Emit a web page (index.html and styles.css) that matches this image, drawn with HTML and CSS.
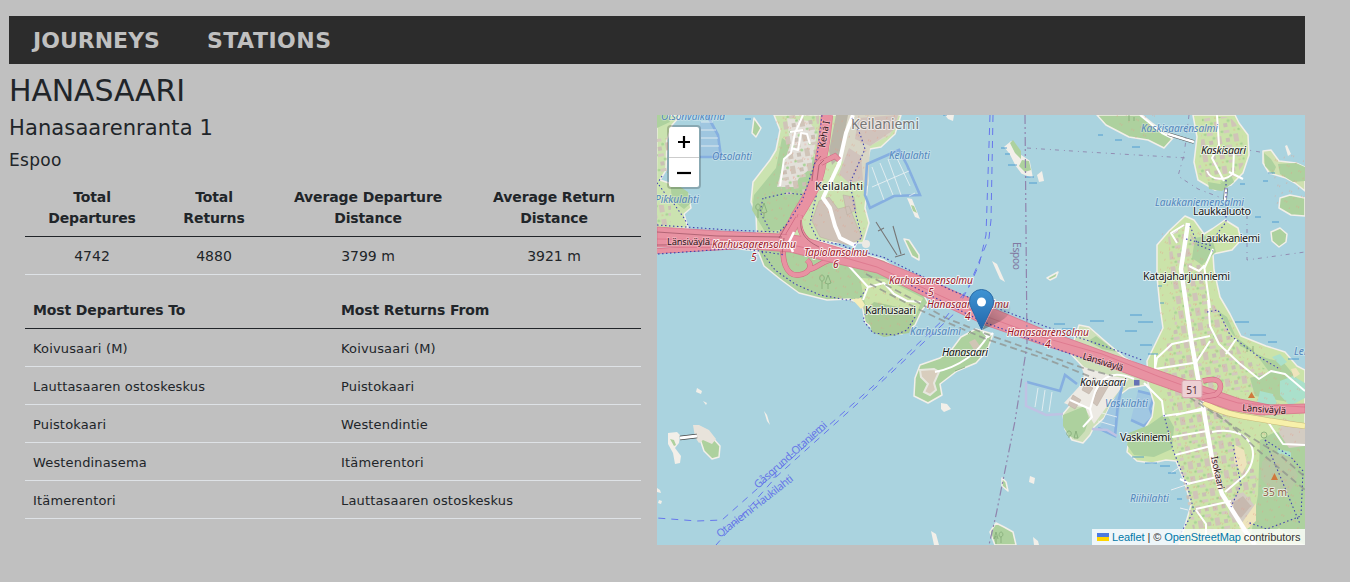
FILE: index.html
```html
<!DOCTYPE html>
<html lang="en">
<head>
<meta charset="utf-8">
<title>Hanasaari</title>
<link rel="stylesheet" href="styles.css">
</head>
<body>
<div class="page">
  <nav class="nav"><a class="nav-link journeys">JOURNEYS</a><a class="nav-link stations">STATIONS</a></nav>
  <h1 class="name"><span>HANASAARI</span></h1>
  <div class="columns">
    <section class="details">
      <h2 class="address">Hanasaarenranta 1</h2>
      <h3 class="city">Espoo</h3>
      <div class="tables">
        <table class="table totals">
          <colgroup><col class="c1"><col class="c2"><col class="c3"><col class="c4"></colgroup>
          <thead><tr><th>Total<br>Departures</th><th>Total<br>Returns</th><th>Average Departure<br>Distance</th><th>Average Return<br>Distance</th></tr></thead>
          <tbody><tr><td>4742</td><td>4880</td><td>3799 m</td><td>3921 m</td></tr></tbody>
        </table>
        <table class="table top">
          <thead><tr><th>Most Departures To</th><th>Most Returns From</th></tr></thead>
          <tbody>
            <tr><td>Koivusaari (M)</td><td>Koivusaari (M)</td></tr>
            <tr><td>Lauttasaaren ostoskeskus</td><td>Puistokaari</td></tr>
            <tr><td>Puistokaari</td><td>Westendintie</td></tr>
            <tr><td>Westendinasema</td><td>Itämerentori</td></tr>
            <tr><td>Itämerentori</td><td>Lauttasaaren ostoskeskus</td></tr>
          </tbody>
        </table>
      </div>
    </section>
    <section class="map">
      <svg class="tiles" viewBox="657 115 648 430" width="648" height="430">
        <defs>
          <pattern id="houses" width="17" height="15" patternUnits="userSpaceOnUse" patternTransform="rotate(-10)">
            <rect x="1" y="1" width="5" height="8" fill="#d0c4b8"/><rect x="10" y="4" width="4" height="4" fill="#c9bfb5"/><rect x="9" y="11" width="6" height="3" fill="#d3c9be"/><circle cx="7.500" cy="12" r="1.300" fill="#a5d191"/><circle cx="15.500" cy="2" r="1.500" fill="#a8d497"/><circle cx="3" cy="12" r=".6" fill="#e88a80"/>
          </pattern>
          <pattern id="specks" width="13" height="11" patternUnits="userSpaceOnUse" patternTransform="rotate(25)">
            <path d="M1 2h3M8 7h2" stroke="#e39b88" stroke-width=".8" stroke-dasharray="1 1"/>
          </pattern>
          <linearGradient id="pin" x1="0" y1="0" x2="0" y2="1"><stop offset="0" stop-color="#3e93d3"/><stop offset="1" stop-color="#2468ab"/></linearGradient>
          <linearGradient id="shade" x1="0" y1="1" x2="1" y2="0"><stop offset="0" stop-color="#222" stop-opacity=".45"/><stop offset="1" stop-color="#222" stop-opacity="0"/></linearGradient>
        </defs>
        <rect x="657" y="115" width="648" height="430" fill="#aad3df"/>

        <!-- western shore -->
        <path class="shore" fill="#cbe3b0" d="M657 115h24l-9 10-5 15-1 30-6 10 12 4 16 10 3 14-7 6 4 14-32 1z"/>
        <path fill="url(#houses)" d="M657 138h11v35h-11zM657 205h14v20h-14z"/>
        <path fill="#add19e" d="M670 180l18 12 3 11-7 6-12-9zM657 115h10l3 7-13 6z"/>
        <path fill="#9fc6e0" d="M700 122h13l7 17v18h-20z"/>
        <path class="marina" d="M707 115l11 20 3 22h-21"/><path class="pier" d="M701 122h12M701 130h15M701 138h17M701 146h18"/>
        <path class="walk" d="M657 184l5-8M659 185l7 10 8 9 10 14 5 9"/>

        <!-- Keilaniemi -->
        <path class="shore" fill="#cbe3b0" d="M774 115h127l-6 19-14 13-11 2-3 15 1 17-3 27 4 15-6 20-106-3-1-26-5-12 2-20 17-22 6-10 4-20z"/>
        <path fill="#add19e" d="M782 138l24 16 14 5-13 40-20 30-22 3-13-22 2-15 22-27z"/>
        <path fill="#e3e0da" d="M787 118l22 3 8 12-6 35-12 10-5 9h-17l5-18 8-24z"/>
        <path fill="url(#houses)" d="M782 115h37v30l-14 48-23 2-3-20 8-22z"/>
        <path fill="#d8d6c6" d="M846 115h53l-9 20-20 11-2 40-18-15-10-13z"/>
        <path fill="#d1c3bc" d="M858 118l40-3-3 14-25 17-15-7zM849 148l12 8 2 24-14 3-10-9z"/>
        <path fill="#b9b5a8" d="M836 115h12l-8 42-8 8-3-14z"/>
        <path class="block" d="M819 201l10-4 9 12 11-3 13 32-14 7-15-4-13-4-8-16zM843 195l11 2 2 13-9 5z"/>
        <path fill="url(#specks)" d="M775 115h120v20l-28 12-1 88-50-8-60-9-1-18 20-30z"/>
        <path class="minor" d="M803 115l-8 18-4 20-7 6-4 27M791 148l7 2 3-17 6 1 3 10M803 130l-13 2"/>
        <path class="street" d="M853 115l-7 18-7 31-16 34 7 10 5 18 5 12 16 8"/>
        <path class="walk" d="M852 118l8 16 5 15-15 34 6 32 6 22-9 10M816 196l-6 28 8 16 28 6M765 198l22-5 30 3M763 198l-3 14 10 18"/>
        <path class="marina" d="M867 164l32-14 8 15 13 30-26 1-24 12-5-13z"/><path class="pier" d="M872 167l12 33M880 163l13 32M888 159l13 36M896 156l14 30M872 187l37-16M909 196l6-3"/>

        <!-- Karhusaari and the southern bank -->
        <path class="shore" fill="#add19e" d="M657 247l55-1 46 5 6 15 16 13 19 14 28 7 22-1 13 5 3 18 13 11 24 1 13-9 7-15 6-7-10-19-34-24-70-20z"/>
        <path fill="#cbe3a9" d="M860 278l25 1 38 19-8 19-8 11-12-10-15 4-15-18z"/>
        <path fill="#aacb97" d="M866 310l8-8 33 7 8 9-6 15-25 4-12-5z"/>
        <path fill="url(#specks)" d="M775 250l85 15 54 35-6 28-40 1-10-25-30-7-35-14z"/>
        <path class="walk" d="M762 252l13 18 20 14 25 11 27 5 12-1 9-12M867 310l-4 10 10 13 22 2 12-5 8-13"/>
        <path class="minor" d="M848 265l20 22 16-4 10 11 13 7 14 1M863 300l5-13"/>
        <path fill="#f4edba" d="M852 299l9-1 4 7-4 4z"/>
        <circle cx="866" cy="244" r="4" fill="#eceae4"/>

        <!-- Hanasaari -->
        <path class="shore" fill="#add19e" d="M976 329l17 5-6 17-11 12-19 8-17 13 2 11-14 8-14-7 1-18 5-13 20-7 12-9 9-12z"/>
        <path fill="#d8cdbd" stroke="#e7e7df" stroke-width="2" d="M920 370l14-1 5 3-5 11 2 7-6 5-6-3 4-8-7-7z"/>
        <path fill="#d0c5b5" d="M969 342l6-3 5 7-6 4z"/>
        <path class="minor" d="M935 372c25-5 44-20 53-37M983 332l5 5 5-4"/>

        <!-- Koivusaari -->
        <path class="shore" fill="#cddfb9" d="M1079 325l10 2 16 14 20 17 23 12 4 14-23 4-16 12-9 18-10 9-4 8-7 8-11-3-7-11-2-15 10-12 10-10 2-23-15-16z"/>
        <path fill="#edeae4" d="M1081 366l31 10 17 3-18 22-17 23-10-17-13-1-7-3 22-24z"/>
        <path fill="#add19e" d="M1085 406l4 13-4 12-7 8-9-3-6-10v-11zM1096 336l21 16-15-3-14-8z"/>
        <path class="block" d="M1073 395l8 5-6 9-7-4zM1085 383l8 5-4 6-7-4zM1102 381l7 4-12 21-5-4z"/>
        <path class="minor" d="M1134 379c-28-12-35 5-39 13l-5 17 2 8-9 10M1070 400l20 9"/>
        <path fill="#a1c8e2" d="M1123 385l-3 23-4 29-17-8 12-25zM1138 391l16 4-4 14 3 8-9 9-13-7z"/>
        <path class="marina" d="M1027 382l33 9 5-16 12 9M1123 383l-5 20-3 33-17-8M1138 391l16 4-4 14 3 8-9 9-13-6"/>
        <path class="mole" d="M1026 382v24l20 9 17-1M1092 429l15 1 10 6"/><path class="pier" d="M1038 388l-3 19M1045 390l-3 21M1052 392l-3 20M1108 404l10 3M1102 413l15 4M1098 421l17 5"/>

        <!-- Lauttasaari -->
        <path class="shore" fill="#cbe3a9" d="M1185 216l9 4 10 14 8-5 13-9 13 8 3 12-9 10-19 4 1 16 6 27 10 17 11 22 25 10 19 6 12 14 8 4v175h-126l8-26 4-14-7-25-8-19-10-1-14 3-15-2-10-9 2-13 14-8 9-14 2-14-6-20-1-22 16-33-3-21-3-30 0-32 12-14z"/>
        <path fill="url(#houses)" d="M1168 234l15-10 12 16 10 28 5 30 18 31 15 28 28 15-12 20-45-1 18 35 25 50-8 62-54 1-13-64-10-68-9-25 3-36 9-18-4-50z"/>
        <path fill="#add19e" d="M1195 238l16-3 5 17-14 13-10-7zM1218 311l9 6 13 29 26 12 18 5 19 23-8 17-40-7-5-18 20-5-17-23-20-15zM1129 433l20-8 17-12 8 14-2 22-18 8-20-2-7-10zM1260 440l15-8 30 4v109l-26-17-18 12-10-5 7-40z"/>
        <path fill="#aae0cb" d="M1280 381l13-5 12 7v15l-15 8-10-11zM1260 391l13 3 4 9-8 4-12-4zM1272 357l8-3 7 8-6 4z"/>
        <path fill="#d3ccc2" d="M1283 419l22 5v22l-16 2-10-15zM1230 500l13-8 13 15-15 18-12-9z"/>
        <path fill="#c7b9af" d="M1234 502l9-6 8 10-10 12-8-7z"/>
        <path fill="#b7c9a4" d="M1262 462l10-10 18 6 8 18-8 16-20-2-9-12z"/>
        <path fill="#aae0cb" d="M1278 449l13 3v5l-14-4z"/>
        <path fill="#eee4bc" d="M1235 445l9 5 3 14-5 10-8-12zM1256 503v18l-13 12-4-6zM1291 369l5-1 4 6-6 4z"/>
        <path fill="url(#specks)" d="M1160 230h40l20 80 80 70v155h-100l-30-95-10-50z"/>
        <path class="minor" d="M1208 300l2 26 9 18 20 19 20 16 12-8 14 3 20 17M1210 336l-38 8-15 14-2 11 38-6M1226 354l10-15M1155 369v-15M1176 415l28-7M1172 437l35-6M1212 432c38-7 51 20 33 43l-20 17M1175 455l36-9M1190 484l-10-5M1196 509l35-8M1187 484l30-7M1144 383l18 18 2 15 40-6M1268 422l15 22 22 1M1210 341l-15 23M1189 266l10 5 5-5M1204 265l6 43M1213 249l-9 20M1177 243l-6-10 13-8M1196 510l10 14v14"/>
        <path class="street wide" d="M1188 223l-7 46 11 76 10 55 12 70 8 24 24 38 9 13"/>
        <path class="walk" d="M1190 226l8 19 15 6M1186 239l27 7M1164 415l9 35 15 38 6 23-18 30M1265 440l25 16 13 15-2 45-34 13-20-7M1233 445l8 40-10 22M1207 312l11-2 12 25 29 22 19 11M1265 440l35 84"/>
        <path class="rail" d="M1180 391l38 25 34 22 28 17 25 22M1190 393l35 27 35 32 45 38"/>
        <path d="M1204 402c8 6 23 12 43 15 18 3 34 6 58 9" fill="none" stroke="#c8b97a" stroke-width="6"/><path d="M1204 402c8 6 23 12 43 15 18 3 34 6 58 9" fill="none" stroke="#f7f0aa" stroke-width="5"/>

        <!-- northern islands -->
        <path class="shore" fill="#add19e" d="M1097 115l9 10 23 12 19 3 16 8 9-10-21-15-10-8z"/>
        <path class="shore" fill="#cbe3a9" d="M1193 115l4 22-3 25 4 18 17 10 16-5 12-12 6-18-1-20-9-12-4-8z"/>
        <path fill="url(#houses)" d="M1202 117h28l12 14 3 31-10 14-21 10-16-13 3-30z"/>
        <path fill="#add19e" d="M1208 182l12 2 11-9 3 7-12 9-13-2z"/>
        <path class="minor" d="M1217 115l2 30-7 13 12 23M1207 171c4 10 20 10 26 2l1-22M1229 172l14 7M1140 115l22 18 10 5"/>
        <path d="M1168 134l26 8" stroke="#555" stroke-width="3.600"/><path d="M1168 134l26 8" stroke="#fff" stroke-width="2.500"/>
        <path d="M1226 188l-1 13" stroke="#555" stroke-width="3.600"/><path d="M1226 188l-1 13" stroke="#fff" stroke-width="2.500"/>
        <path class="walk" d="M1226 180v42l-9 12-8 9"/>
        <path class="shore" fill="#cfe0b0" d="M1263 151l8-1 8 11 17 2 9 4v24l-10-8-9-5-17-5-6-10z"/>
        <path fill="#add19e" d="M1264 153l7 6 5 8-3 7-8-8zM1278 164l18-1 9 4v14l-12 1-13-8z"/>
        <path class="shore" fill="#add19e" d="M1280 198l10-3 15 3v18l-14-1-12-7zM1271 232l9-4 7 6-1 8-7 5-7-6z"/>
        <path fill="url(#specks)" d="M1110 115h45v25h-20zM1270 155h34v54h-28z"/>
        <path fill="#f2efe9" d="M1285 146l2-1 4 9-3 2z"/>

        <!-- islets -->
        <path class="shore" fill="#f2efe9" d="M1005 147l6-5 2 1 7 12 9 6 3 16-10-4-6-8-6-12z"/>
        <path fill="#add19e" d="M1010 143l3-3 8 11 0 8-6-6zM1022 160l7 1 2 9-6 2-6-6z"/>
        <path class="shore" fill="#add19e" d="M904 239l5 1 10 15v5l-7-4zM1047 278l11-6-2 5-6 3zM698 433l13 3 9 10-1 11-7 2-8-8zM754 118l7 10-5 9-4-4zM995 545l-5-13 6-9 8 4 9 5 3 13zM1002 478l4 4 2 9-6-5z"/>
        <path fill="#e8e3db" d="M693 425h6l10 5 7 9-4 5-9-4-4 3-4-6z"/>
        <path fill="#f2efe9" d="M992 261l5 3 8 18-5-3zM1037 175l5-4 2 10-5 1zM907 198l5 1 8 20-5-2zM945 115h9l-1 6-5-2zM697 388l5 3-1 3-5-2zM764 411l3 4 3 10-3-4zM668 433l9-1 3 3-1 8-4 5 6 8-1 7-5 1-2-11-5-9zM657 488l3 2 1 3-4-1zM659 500l3 1-1 3-3-1zM941 403l6 1 4 5-7 3-3-3zM931 531l5 3 3 11h-5zM1033 537l5 4 1 4h-5zM1030 476l5 2-1 6-5-2zM703 401l4 2-1 2z"/>
        <path fill="#add19e" d="M911 205l3 1 3 7-4-2zM670 439l4 1 2 5-2 1z"/>
        <path d="M680 438l17-2" stroke="#444" stroke-width="4.500"/><path d="M680 438l17-2" stroke="#fff" stroke-width="3"/>
        <path d="M1173 234l5-4M1171 473l9-6M1171 490l18-6M1180 508l8 2" stroke="#e9edf0"/>
        <path d="M876 222l21 33M893 226l8 28M878 231l6-3M895 257l10-3" fill="none" stroke="#777" stroke-width="1.100"/>
        <path class="reeds" d="M1001 148h6M1005 154h5M1008 165h9M1026 177h8M1029 183h8M1054 324h11M1062 329h14M1090 321h14M1130 315h12M1138 322h15M1125 331h12M1140 345h12M1148 354h10M1098 135h5M1115 140h7M1132 147h8M1268 173h7M1263 181h5M1255 217h6M1272 222h7M1240 184h5M1158 286h4M1160 303h4M1235 322h14M1250 335h16M1268 342h9M1288 359h11M1132 457h12M1145 463h12M1160 466h10M1168 473h8M1177 499h5M943 115h4M745 119h6"/>

        <!-- motorway -->
        <path class="rail" d="M866 274l48 26 32 18 40 16 52 18 45 16 30 8M870 284l50 26 26 12 40 17 60 20 50 20"/>
        <path class="motor-edge" d="M827 115c-2 20-3 31-6 42-1 22-11 38-24 59-4 8-9 20-16 22"/>
        <path class="motor" d="M827 115c-2 20-3 31-6 42-1 22-11 38-24 59-4 8-9 20-16 22"/>
        <path class="ramp-edge" d="M798 218l-14 24c-3 18 2 34 14 33s15-10 9-15M807 270c12-1 15-13 38-11M800 215c-4 18 8 28 20 34M821 163l14-7 4 4M657 251l90-5 25-3"/>
        <path class="ramp" d="M798 218l-14 24c-3 18 2 34 14 33s15-10 9-15M807 270c12-1 15-13 38-11M800 215c-4 18 8 28 20 34M821 163l14-7 4 4M657 251l90-5 25-3"/>
        <path class="carriage" d="M657 227l63 4 60 3 20 2 30 9 47 14 53 21 55 25 55 23 60 22 60 21 40 14 40 14 30 6 35-1v9l-45 2-30-5-40-14-40-14-63-23-47-15-55-19-55-26-53-26-47-11-40-10-50-4-83-1z"/>
        <path d="M657 239l70 1 61 4 44 10 45 13 53 24 55 25 57 21 60 17 58 23 30 11 48 15 67 4" fill="none" stroke="#ca4969" stroke-width=".7" opacity=".45"/>
        <path class="ramp-edge" d="M1203 381c22-6 20 10 12 14l-13 2"/><path class="ramp" d="M1203 381c22-6 20 10 12 14l-13 2"/>
        <path class="ramp" d="M799 220l-14 22M800 217c-3 15 5 24 16 30"/>
        <path d="M657 232l60 4 65 1M657 245l80-1 46 2M779 238l8-14M812 181l2-17 7-8M817 180l2-15 5-5M784 238l-2 16M801 220c-2 15 8 22 18 27" fill="none" stroke="#734" stroke-width=".8" opacity=".6"/>
        <path d="M794 232l-5 10 4 10" fill="none" stroke="#fff" stroke-width="2.500"/>
        <path class="walk" d="M657 225l72 5 50 2 8-8 15-23 15-44 5-42M658 254l82-6 45 7M845 247l38 10 28 14 42 20 30 12 64 24 60 20 35 13M904 282l77 39 62 23 58 21"/>

        <!-- boundaries and ferry lines -->
        <path class="boundary" d="M1025 115l2 230-12 76-19 94-7 30"/>
        <path class="boundary faint" d="M1027 148l60 4 100 6M1189 115l-5 40-6 21 20 13 21 8M1260 152l-12-2M1247 215v45l58-8"/>
        <path class="ferry" d="M990 115l-4 120-7 30-10 22-23 30-66 63-158 140-25 1-40-3M993 115l-2 105-2 18-21 50-12 24-80 75-100 90-60 68"/>

        <!-- trees, peaks, station -->
        <g fill="none" stroke="#83a977" stroke-width=".8"><path d="M758 218v-8c-3 0-3-6 0-6s3 6 0 6M764 218v-5l-3-1 3-9 3 9-3 1M822 289v-8c-3 0-3-6 0-6s3 6 0 6M828 289v-5l-3-1 3-8 3 8-3 1M996 544v-8l-2 3 2-7 2 7M1001 543v-6c-3 0-2-5 0-5s3 4 0 5M1069 438v-2c-3 0-3-5 0-5s3 5 0 5M1074 438l2-7 2 7zM1129 121v-6M1134 121v-4"/><circle cx="1264" cy="435" r="3"/><path d="M1247 352v-6M1253 352v-6M955 371l10-4M968 334l3-3"/></g>
        <path d="M1248 398l3.500-6 3.500 6zM1271 480l3.500-7 3.500 7z" fill="#cf793d"/>
        <rect x="1134" y="380" width="5.500" height="5.500" fill="#6572b5"/>

        <g class="water">
          <text x="661" y="120" textLength="64">Otsonvalkama</text><text x="712" y="160" textLength="40">Otsolahti</text><text x="655" y="203" textLength="44">Pikkulahti</text><text x="889" y="159" textLength="41">Keilalahti</text><text x="910" y="334.500" textLength="51">Karhusalmi</text><text x="1105" y="407" textLength="43">Vaskilahti</text><text x="1130" y="502" textLength="39">Riihilahti</text><text x="1141" y="132" textLength="77">Kaskisaarensalmi</text><text x="1155" y="206" textLength="89">Laukkaniemensalmi</text><text x="1294" y="355">Lehtisaarensalmi</text>
        </g>
        <g class="place">
          <text class="suburb" x="851" y="128.500" textLength="68">Keilaniemi</text><text x="815" y="190" textLength="48">Keilalahti</text><text x="865" y="314" textLength="51">Karhusaari</text><text x="1143" y="279.500" textLength="87">Katajaharjunniemi</text><text x="1201" y="241.500" textLength="59">Laukkaniemi</text><text x="1193" y="214.500" textLength="58">Laukkaluoto</text><text x="1120" y="440.500" textLength="50">Vaskiniemi</text>
          <g font-style="italic"><text x="942" y="356" textLength="46">Hanasaari</text><text x="1080" y="386" textLength="46">Koivusaari</text><text x="1201" y="153.500" textLength="45">Kaskisaari</text></g>
        </g>
        <g class="junction">
          <text x="712" y="248" textLength="84">Karhusaarensolmu</text><text x="751" y="260.500">5</text><text x="804" y="256" textLength="64">Tapiolansolmu</text><text x="833" y="267.500">6</text><text x="889" y="283.500" textLength="84">Karhusaarensolmu</text><text x="928" y="295.500">5</text><text x="927" y="307.500" textLength="82">Hanasaarensolmu</text><text x="965" y="319.500">4</text><text x="1007" y="336" textLength="82">Hanasaarensolmu</text><text x="1045" y="348">4</text>
        </g>
        <g class="road">
          <text x="667" y="244.500" textLength="43">Länsiväylä</text><text transform="translate(1082 359) rotate(17)" textLength="42">Länsiväylä</text><text transform="translate(1242 411) rotate(4)" textLength="44">Länsiväylä</text><text transform="translate(1211 457) rotate(78)" textLength="34">Isokaari</text><text transform="translate(825 148) rotate(-80)" textLength="27">Kehä I</text>
        </g>
        <g class="route"><text transform="translate(758 489) rotate(-42)" textLength="94">Gåsgrund-Otaniemi</text><text transform="translate(720 538) rotate(-38)" textLength="94">Otaniemi-Haukilahti</text></g>
        <text class="border-name" transform="translate(1013 242) rotate(90)" textLength="28">Espoo</text>
        <text class="peak" x="1263" y="496" textLength="24">35 m</text>
        <rect x="1182" y="380.500" width="20" height="17" rx="2" fill="#edd0d4" stroke="#d9a5ae"/><text class="shield" x="1192" y="393.500">51</text>

        <!-- marker -->
        <path d="M982 330l11-21c8-11 20-8 17 2-2 8-13 12-28 19z" fill="url(#shade)"/>
        <path d="M981.500 329.500l-9.700-20.500c-1.500-3-2.300-5-2.300-7.500a12 12 0 0 1 24 0c0 2.500-.8 4.500-2.300 7.500z" fill="url(#pin)" stroke="#2b6da8"/>
        <circle cx="981.500" cy="302" r="4.500" fill="#fff"/>
      </svg>
      <div class="zoom"><a class="zoom-button"><svg width="14" height="14"><path d="M1 7h12M7 1v12" stroke="#000" stroke-width="2.200"/></svg></a><a class="zoom-button"><svg width="14" height="14"><path d="M0 7h14" stroke="#000" stroke-width="2.200"/></svg></a></div>
      <div class="credit"><svg class="flag" width="12" height="8"><path fill="#4c7be1" d="M0 0h12v4H0z"/><path fill="#ffd500" d="M0 4h12v4H0z"/></svg><span class="credit-text"><a>Leaflet</a> <i>|</i> © <a>OpenStreetMap</a> contributors</span></div>
    </section>
  </div>
</div>
</body>
</html>
```
FILE: styles.css
```css
* { box-sizing: border-box; }
body { margin: 0; min-height: 582px; background: #c0c0c0; color: #212529; font-family: Verdana, "DejaVu Sans", sans-serif; font-size: 14px; line-height: 21px; overflow: hidden; }
.page { width: 1305px; padding: 16px 0 0 9px; }
.nav { display: flex; align-items: center; gap: 47px; height: 48px; padding: 1px 0 0 24px; background: #2c2c2c; }
.nav-link { color: #c0c0c0; font-size: 22px; font-weight: bold; }
.stations { letter-spacing: .5px; }
h1, h2, h3 { margin: 0; font-weight: normal; }
.name { height: 51px; padding-top: 9px; font-size: 30px; line-height: 36px; letter-spacing: -.15px; }
.columns { display: grid; grid-template-columns: 648px 648px; }
.address { height: 32px; font-size: 21px; line-height: 27px; letter-spacing: .12px; }
.city { height: 31px; padding-top: 2px; font-size: 17px; line-height: 22px; letter-spacing: .3px; }
.tables { padding: 0 16px; }
.table { width: 616px; margin-bottom: 16px; border-collapse: separate; border-spacing: 0; table-layout: fixed; }
.table th, .table td { padding: 9px 8px 7px; border-bottom: 1px solid #dee2e6; }
.table th { border-bottom-color: #212529; text-align: left; white-space: nowrap; letter-spacing: -.12px; }
.totals th, .totals td { text-align: center; }
.c1 { width: 134px; } .c2 { width: 110px; } .c3 { width: 198px; } .c4 { width: 174px; }
.top td { font-size: 13px; letter-spacing: .16px; }
.map { position: relative; width: 648px; height: 430px; overflow: hidden; font-family: "Noto Sans", sans-serif; }
.tiles { display: block; }
.shore { stroke: #f2efe9; stroke-width: 1.5; stroke-linejoin: round; }
.marina { fill: none; stroke: #86afe0; stroke-width: 2.6; }
.mole { fill: none; stroke: #bfc2e3; stroke-width: 2.5; }
.pier { fill: none; stroke: #edf2f4; stroke-width: .8; }
.block { fill: #cfc2b8; stroke: #b9aca1; stroke-width: .5; }
.minor { fill: none; stroke: #fff; stroke-width: 2; stroke-linejoin: round; }
.street { fill: none; stroke: #fff; stroke-width: 4; stroke-linejoin: round; }
.wide { stroke-width: 4.5; }
.walk { fill: none; stroke: #4040b0; stroke-width: 1.1; stroke-dasharray: 1.5 2.5; }
.rail { fill: none; stroke: #8f918d; stroke-width: 1.8; stroke-dasharray: 7 4; opacity: .75; }
.reeds { stroke: #3990cc; stroke-width: .8; }
.motor-edge { fill: none; stroke: #d8748c; stroke-width: 12; }
.motor { fill: none; stroke: #e892a2; stroke-width: 11; }
.ramp-edge { fill: none; stroke: #cf6680; stroke-width: 5.5; }
.ramp { fill: none; stroke: #e892a2; stroke-width: 4.4; }
.carriage { fill: #e892a2; stroke: #d8748c; stroke-width: .8; }
.boundary { fill: none; stroke: #9084ad; stroke-width: 1.2; stroke-dasharray: 9 3 2 3 2 3; }
.faint { stroke-width: .9; stroke-dasharray: 4 5 1 4; }
.ferry { fill: none; stroke: #6677ed; stroke-width: 1; stroke-dasharray: 7 6; }
.tiles text { font-size: 10.2px; paint-order: stroke; stroke: rgba(255, 255, 255, .65); stroke-width: 2px; stroke-linejoin: round; }
.tiles .water text { fill: #5486bd; stroke: rgba(255, 255, 255, .25); font-style: italic; }
.tiles .place text { fill: #151515; font-size: 10.8px; }
.tiles .place .suburb { fill: #777; font-size: 14px; }
.tiles .junction text { fill: #9b1525; stroke: rgba(255, 255, 255, .8); font-style: italic; }
.tiles .road text { fill: #2d161a; font-size: 9.5px; stroke: rgba(255, 220, 225, .4); }
.tiles .route text { fill: #6677e7; font-size: 10.8px; stroke: none; }
.tiles .border-name { fill: #8179a1; stroke: none; }
.tiles .peak { fill: #8e6149; }
.tiles .shield { fill: #5c3340; stroke: none; text-anchor: middle; }
.zoom { position: absolute; left: 10px; top: 10px; width: 34px; height: 64px; border: 2px solid rgba(0, 0, 0, .2); border-radius: 4px; background: #fff; background-clip: padding-box; }
.zoom-button { display: flex; align-items: center; justify-content: center; height: 30px; }
.zoom-button + .zoom-button { border-top: 1px solid #ccc; }
.credit { position: absolute; right: 0; bottom: 0; display: flex; align-items: center; gap: 3px; width: 213px; height: 16px; padding-left: 5px; background: rgba(255, 255, 255, .8); color: #333; font: 11px/16px "Liberation Sans", Arial, sans-serif; letter-spacing: -.08px; white-space: nowrap; }
.credit a { color: #0078a8; }
.credit i { font-style: normal; }
```
